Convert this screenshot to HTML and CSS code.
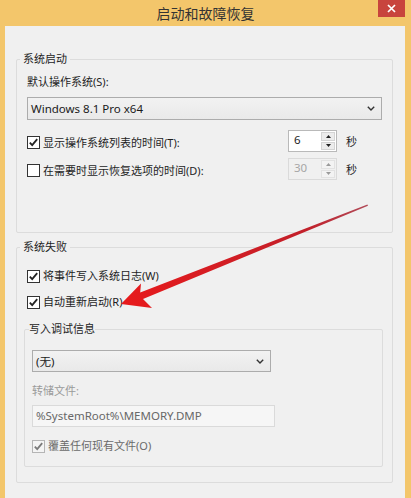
FILE: index.html
```html
<!DOCTYPE html>
<html lang="zh-CN">
<head>
<meta charset="utf-8">
<title>启动和故障恢复</title>
<link rel="stylesheet" href="styles.css">
</head>
<body>
<div class="window">
  <div class="titlebar">
    <div class="title">启动和故障恢复</div>
    <div class="close"><svg width="9" height="9" viewBox="0 0 9 9"><path d="M1 1 L8 8 M8 1 L1 8" stroke="#fff" stroke-width="1.7" fill="none"/></svg></div>
  </div>
  <div class="client">
    <div class="group group--startup">
      <div class="group-title">系统启动</div>
      <div class="label">默认操作系统(S):</div>
      <div class="combo combo--wide">
        <span>Windows 8.1 Pro x64</span>
        <svg class="chev" width="8" height="5" viewBox="0 0 8 5"><polyline points="0.8,0.8 4,4 7.2,0.8" fill="none" stroke="#333" stroke-width="1.4"/></svg>
      </div>
      <div class="timer-row timer-row--first">
        <div class="check"><span class="box"><svg width="11" height="11" viewBox="0 0 11 11"><polyline points="1.8,5.6 4.2,8.2 9.2,2.2" fill="none" stroke="#222" stroke-width="1.8"/></svg></span><span>显示操作系统列表的时间(T):</span></div>
        <div class="spin">
          <span class="spin-val">6</span>
          <span class="spin-btns"><span class="spin-btn"><svg width="5" height="3" viewBox="0 0 5 3"><polygon points="0,3 2.5,0 5,3" fill="#222"/></svg></span><span class="spin-btn"><svg width="5" height="3" viewBox="0 0 5 3"><polygon points="0,0 2.5,3 5,0" fill="#222"/></svg></span></span>
        </div>
        <span class="unit">秒</span>
      </div>
      <div class="timer-row">
        <div class="check"><span class="box"></span><span>在需要时显示恢复选项的时间(D):</span></div>
        <div class="spin spin--disabled">
          <span class="spin-val">30</span>
          <span class="spin-btns"><span class="spin-btn"><svg width="5" height="3" viewBox="0 0 5 3"><polygon points="0,3 2.5,0 5,3" fill="#9a9a9a"/></svg></span><span class="spin-btn"><svg width="5" height="3" viewBox="0 0 5 3"><polygon points="0,0 2.5,3 5,0" fill="#9a9a9a"/></svg></span></span>
        </div>
        <span class="unit">秒</span>
      </div>
    </div>

    <div class="group group--failure">
      <div class="group-title">系统失败</div>
      <div class="check check--log"><span class="box"><svg width="11" height="11" viewBox="0 0 11 11"><polyline points="1.8,5.6 4.2,8.2 9.2,2.2" fill="none" stroke="#222" stroke-width="1.8"/></svg></span><span>将事件写入系统日志(W)</span></div>
      <div class="check check--restart"><span class="box"><svg width="11" height="11" viewBox="0 0 11 11"><polyline points="1.8,5.6 4.2,8.2 9.2,2.2" fill="none" stroke="#222" stroke-width="1.8"/></svg></span><span>自动重新启动(R)</span></div>
      <div class="group group--debug">
        <div class="group-title group-title--inset">写入调试信息</div>
        <div class="combo combo--debug">
          <span>(无)</span>
          <svg class="chev" width="8" height="5" viewBox="0 0 8 5"><polyline points="0.8,0.8 4,4 7.2,0.8" fill="none" stroke="#333" stroke-width="1.4"/></svg>
        </div>
        <div class="label label--disabled">转储文件:</div>
        <div class="path">%SystemRoot%\MEMORY.DMP</div>
        <div class="check check--disabled"><span class="box"><svg width="11" height="11" viewBox="0 0 11 11"><polyline points="1.8,5.6 4.2,8.2 9.2,2.2" fill="none" stroke="#7a7a7a" stroke-width="1.8"/></svg></span><span>覆盖任何现有文件(O)</span></div>
      </div>
    </div>
  </div>

  <svg class="annotation" width="411" height="498" viewBox="0 0 411 498">
    <defs>
      <linearGradient id="shaft" x1="368" y1="205" x2="121" y2="304" gradientUnits="userSpaceOnUse">
        <stop offset="0" stop-color="#b04a58"/>
        <stop offset="0.25" stop-color="#c2202a"/>
        <stop offset="1" stop-color="#e81a1c"/>
      </linearGradient>
    </defs>
    <polygon points="121,304 152,308 143,299 368,205.8 367.4,204.4 140.2,292.4 141,283.5" fill="url(#shaft)"/>
  </svg>
</div>
</body>
</html>
```

FILE: styles.css
```css
html, body {
  margin: 0;
  padding: 0;
}

body {
  font-family: "Noto Sans", "Noto Sans CJK SC", sans-serif;
  font-size: 11px;
  color: #1e1e1e;
}

.window {
  position: relative;
  width: 411px;
  height: 498px;
  background: #f3c66b;
  display: flex;
  flex-direction: column;
  overflow: hidden;
}

.titlebar {
  height: 26px;
  flex: none;
  display: grid;
  grid-template-columns: 1fr auto 1fr;
  align-items: start;
}

.title {
  grid-column: 2;
  align-self: center;
  font-size: 14px;
  line-height: 18px;
  color: #333;
  padding-top: 1px;
}

.close {
  grid-column: 3;
  justify-self: end;
  width: 27px;
  height: 17px;
  margin-right: 6px;
  background: #c8443d;
  display: flex;
  align-items: center;
  justify-content: center;
}

.client {
  flex: 1;
  margin: 0 6px 0 5px;
  background: #f0f0f0;
  padding: 33px 12px 0 11px;
}

.group {
  border: 1px solid #dcdcdc;
  border-radius: 2px;
  padding: 0 10px;
}

.group-title {
  width: fit-content;
  margin: -8px 0 0 -7px;
  padding: 0 3px;
  background: #f0f0f0;
  line-height: 14px;
  color: #1e1e1e;
}

.group-title--inset {
  margin-left: -3px;
  padding: 0;
}

.group--startup {
  padding-bottom: 52px;
}

.group--failure {
  margin-top: 14px;
  padding: 0 9px 15px 10px;
}

.group--debug {
  margin: 20px 0 0 -3px;
  padding: 0 7px 13px 7px;
}

.label {
  line-height: 14px;
  margin-top: 9px;
}

.combo {
  height: 23px;
  box-sizing: border-box;
  border: 1px solid #acacac;
  background: linear-gradient(#f2f2f2, #e9e9e9);
  display: flex;
  align-items: center;
  justify-content: space-between;
  padding: 0 6px 0 3px;
  font-size: 11.5px;
  color: #1a1a1a;
}

.combo--wide {
  margin-top: 8px;
}

.combo--debug {
  margin-top: 14px;
  width: 239px;
  height: 22px;
}

.chev {
  flex: none;
}

.timer-row {
  display: grid;
  grid-template-columns: 261px 49px auto;
  align-items: center;
  margin-top: 6px;
}

.timer-row--first {
  margin-top: 10px;
}

.timer-row .check {
  margin-top: 3px;
}

.check {
  display: flex;
  align-items: center;
  gap: 3px;
  line-height: 14px;
}

.box {
  width: 13px;
  height: 13px;
  box-sizing: border-box;
  border: 1px solid #333;
  background: #fff;
  display: flex;
  align-items: center;
  justify-content: center;
  flex: none;
}

.check--log {
  margin-top: 15px;
}

.check--restart {
  margin-top: 12px;
}

.check--disabled {
  margin-top: 12px;
  color: #6a6a6a;
}

.check--disabled .box {
  border-color: #b5b5b5;
  background: #f4f4f4;
}

.spin {
  height: 22px;
  box-sizing: border-box;
  border: 1px solid #b9b9b9;
  background: #fff;
  display: flex;
}

.spin-val {
  flex: 1;
  padding-left: 5px;
  font-size: 11.5px;
  line-height: 18px;
}

.spin-btns {
  width: 14px;
  display: flex;
  flex-direction: column;
  margin: 1px 1px 1px 0;
  gap: 1px;
}

.spin-btn {
  flex: 1;
  background: #ececec;
  border: 1px solid #d4d4d4;
  box-sizing: border-box;
  display: flex;
  align-items: center;
  justify-content: center;
}

.spin--disabled {
  border-color: #dadada;
  background: #f0f0f0;
  color: #a6a6a6;
}

.spin--disabled .spin-btn {
  background: #f3f3f3;
  border-color: #e2e2e2;
}

.unit {
  margin-left: 9px;
  font-size: 11px;
}

.label--disabled {
  margin-top: 12px;
  color: #9a9a9a;
}

.path {
  margin-top: 7px;
  width: 243px;
  height: 22px;
  box-sizing: border-box;
  border: 1px solid #dadada;
  background: #f6f6f6;
  padding-left: 3px;
  font-size: 11.5px;
  line-height: 20px;
  color: #686868;
}

.annotation {
  position: absolute;
  left: 0;
  top: 0;
  pointer-events: none;
}
```
